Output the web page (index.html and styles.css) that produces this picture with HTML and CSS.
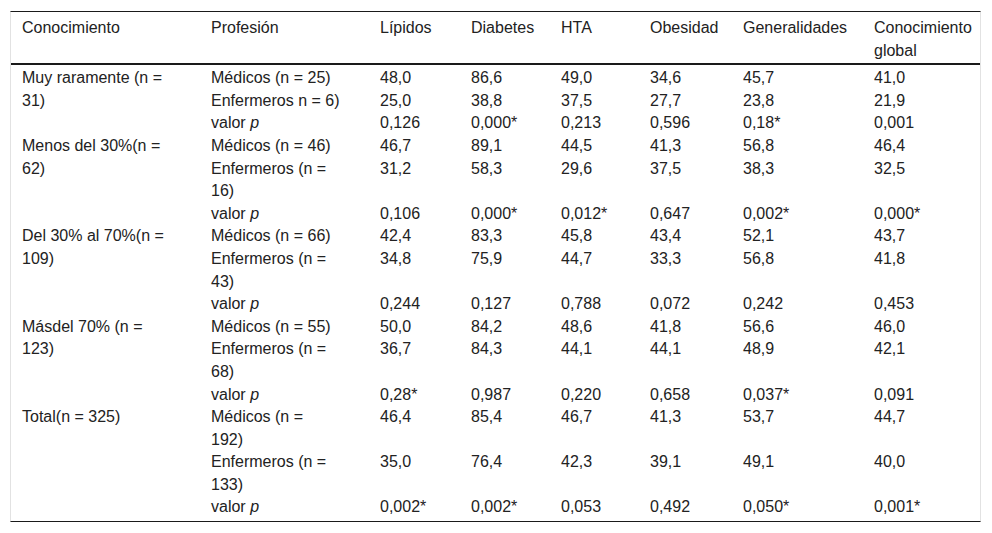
FILE: index.html
```html
<!DOCTYPE html>
<html lang="es">
<head>
<meta charset="utf-8">
<title>Tabla</title>
<link rel="stylesheet" href="styles.css">
</head>
<body>
<table class="data">
  <colgroup>
    <col class="c1"><col class="c2"><col class="c3"><col class="c4"><col class="c5"><col class="c6"><col class="c7"><col class="c8">
  </colgroup>
  <thead>
    <tr>
      <th>Conocimiento</th>
      <th>Profesión</th>
      <th>Lípidos</th>
      <th>Diabetes</th>
      <th>HTA</th>
      <th>Obesidad</th>
      <th>Generalidades</th>
      <th>Conocimiento<br>global</th>
    </tr>
  </thead>
  <tbody>
    <tr class="first">
      <td rowspan="3">Muy raramente (n =<br>31)</td>
      <td>Médicos (n = 25)</td><td>48,0</td><td>86,6</td><td>49,0</td><td>34,6</td><td>45,7</td><td>41,0</td>
    </tr>
    <tr>
      <td>Enfermeros n = 6)</td><td>25,0</td><td>38,8</td><td>37,5</td><td>27,7</td><td>23,8</td><td>21,9</td>
    </tr>
    <tr>
      <td>valor <i>p</i></td><td>0,126</td><td>0,000*</td><td>0,213</td><td>0,596</td><td>0,18*</td><td>0,001</td>
    </tr>
    <tr>
      <td rowspan="3">Menos del 30%(n =<br>62)</td>
      <td>Médicos (n = 46)</td><td>46,7</td><td>89,1</td><td>44,5</td><td>41,3</td><td>56,8</td><td>46,4</td>
    </tr>
    <tr>
      <td>Enfermeros (n =<br>16)</td><td>31,2</td><td>58,3</td><td>29,6</td><td>37,5</td><td>38,3</td><td>32,5</td>
    </tr>
    <tr>
      <td>valor <i>p</i></td><td>0,106</td><td>0,000*</td><td>0,012*</td><td>0,647</td><td>0,002*</td><td>0,000*</td>
    </tr>
    <tr>
      <td rowspan="3">Del 30% al 70%(n =<br>109)</td>
      <td>Médicos (n = 66)</td><td>42,4</td><td>83,3</td><td>45,8</td><td>43,4</td><td>52,1</td><td>43,7</td>
    </tr>
    <tr>
      <td>Enfermeros (n =<br>43)</td><td>34,8</td><td>75,9</td><td>44,7</td><td>33,3</td><td>56,8</td><td>41,8</td>
    </tr>
    <tr>
      <td>valor <i>p</i></td><td>0,244</td><td>0,127</td><td>0,788</td><td>0,072</td><td>0,242</td><td>0,453</td>
    </tr>
    <tr>
      <td rowspan="3">Másdel 70% (n =<br>123)</td>
      <td>Médicos (n = 55)</td><td>50,0</td><td>84,2</td><td>48,6</td><td>41,8</td><td>56,6</td><td>46,0</td>
    </tr>
    <tr>
      <td>Enfermeros (n =<br>68)</td><td>36,7</td><td>84,3</td><td>44,1</td><td>44,1</td><td>48,9</td><td>42,1</td>
    </tr>
    <tr>
      <td>valor <i>p</i></td><td>0,28*</td><td>0,987</td><td>0,220</td><td>0,658</td><td>0,037*</td><td>0,091</td>
    </tr>
    <tr>
      <td rowspan="3">Total(n = 325)</td>
      <td>Médicos (n =<br>192)</td><td>46,4</td><td>85,4</td><td>46,7</td><td>41,3</td><td>53,7</td><td>44,7</td>
    </tr>
    <tr>
      <td>Enfermeros (n =<br>133)</td><td>35,0</td><td>76,4</td><td>42,3</td><td>39,1</td><td>49,1</td><td>40,0</td>
    </tr>
    <tr class="last">
      <td>valor <i>p</i></td><td>0,002*</td><td>0,002*</td><td>0,053</td><td>0,492</td><td>0,050*</td><td>0,001*</td>
    </tr>
  </tbody>
</table>
</body>
</html>
```
FILE: styles.css
```css
html, body {
  margin: 0;
  padding: 0;
  background: #ffffff;
}

body {
  padding: 11px 0 0 10px;
  font-family: "Liberation Sans", Arial, sans-serif;
  font-size: 16px;
  color: #222222;
}

.data {
  width: 971px;
  table-layout: fixed;
  border-collapse: separate;
  border-spacing: 0;
  border-top: 1px solid #1a1a1a;
  border-bottom: 1px solid #1a1a1a;
  border-left: 1px solid #e2e2e2;
  border-right: 1px solid #e2e2e2;
}

.c1 { width: 189px; }
.c2 { width: 169px; }
.c3 { width: 91px; }
.c4 { width: 90px; }
.c5 { width: 89px; }
.c6 { width: 93px; }
.c7 { width: 131px; }
.c8 { width: 117px; }

.data th,
.data td {
  text-align: left;
  vertical-align: top;
  font-weight: normal;
  line-height: 22.6px;
  padding: 0 4px 0 11px;
  white-space: nowrap;
}

.data th {
  padding-top: 5px;
  padding-bottom: 1px;
  border-bottom: 2px solid #1a1a1a;
}

.data .first td {
  padding-top: 2px;
}

.data .last td {
  padding-bottom: 2px;
}

.data i {
  font-style: italic;
}
```
